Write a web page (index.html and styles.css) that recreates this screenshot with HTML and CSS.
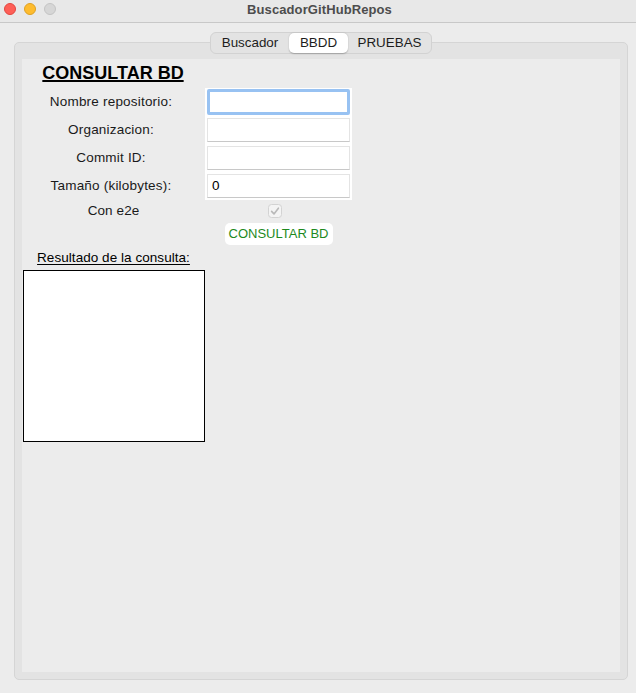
FILE: index.html
```html
<!DOCTYPE html>
<html lang="es">
<head>
<meta charset="utf-8">
<title>BuscadorGitHubRepos</title>
<link rel="stylesheet" href="styles.css">
</head>
<body>
<div class="titlebar">
  <div class="lights">
    <span class="light red"></span>
    <span class="light yellow"></span>
    <span class="light grey"></span>
  </div>
  <div class="title">BuscadorGitHubRepos</div>
  <div></div>
</div>
<div class="content">
  <div class="tabs">
    <span class="tab tab-1">Buscador</span>
    <span class="tab tab-2 active">BBDD</span>
    <span class="tab tab-3">PRUEBAS</span>
  </div>
  <div class="group">
    <div class="panel">
      <div class="row heading-row">
        <h1 class="heading col1">CONSULTAR BD</h1>
      </div>
      <div class="row form">
        <div class="labels col1">
          <span class="label">Nombre repositorio:</span>
          <span class="label">Organizacion:</span>
          <span class="label">Commit ID:</span>
          <span class="label">Tamaño (kilobytes):</span>
        </div>
        <div class="entries col2">
          <div class="entry focus"></div>
          <div class="entry"></div>
          <div class="entry"></div>
          <div class="entry">0</div>
        </div>
      </div>
      <div class="row check-row">
        <span class="col1 label-sm">Con e2e</span>
        <span class="col2 check-cell">
          <svg class="checkbox" width="14" height="14" viewBox="0 0 14 14">
            <rect x="0.5" y="0.5" width="13" height="13" rx="3" fill="#f4f4f4" stroke="#d3d3d3"/>
            <path d="M3.6 7.4 L6 9.9 L10.4 4.2" fill="none" stroke="#b9b9b9" stroke-width="1.6" stroke-linecap="round" stroke-linejoin="round"/>
          </svg>
        </span>
      </div>
      <div class="row button-row">
        <span class="col1"></span>
        <span class="col2 btn-cell"><button class="btn">CONSULTAR BD</button></span>
      </div>
      <div class="result-label">Resultado de la consulta:</div>
      <div class="result-box"></div>
    </div>
  </div>
</div>
</body>
</html>
```

FILE: styles.css
```css
* { box-sizing: border-box; }

html, body {
  margin: 0;
  padding: 0;
}

body {
  width: 636px;
  height: 693px;
  background: #ececec;
  font-family: "Liberation Sans", Arial, sans-serif;
  font-size: 13px;
  color: #1d1d1d;
  overflow: hidden;
}

.titlebar {
  height: 23px;
  display: grid;
  grid-template-columns: 1fr auto 1fr;
  align-items: start;
  background: #e8e8e8;
  border-bottom: 1px solid #c8c8c8;
}

.lights {
  display: flex;
  gap: 8px;
  padding-left: 4px;
  padding-top: 3px;
}

.light {
  width: 12px;
  height: 12px;
  border-radius: 50%;
}

.red { background: #fe5f57; border: 0.5px solid #e2463f; }
.yellow { background: #febc2e; border: 0.5px solid #dea123; }
.grey { background: #d6d6d6; border: 0.5px solid #c4c4c4; }

.title {
  font-weight: bold;
  font-size: 13px;
  line-height: 20px;
  color: #4d4d4d;
  padding-left: 3px;
  letter-spacing: 0.1px;
}

.content {
  padding: 9px 8px 0 14px;
}

.tabs {
  position: relative;
  z-index: 1;
  width: 222px;
  height: 22px;
  margin: 0 auto -12px;
  display: flex;
  align-items: center;
  background: #e3e3e3;
  border: 1px solid #d2d2d2;
  border-radius: 6px;
}

.tab {
  height: 20px;
  line-height: 20px;
  text-align: center;
  color: #1d1d1d;
  font-size: 13.4px;
}

.tab-1 { width: 78px; }
.tab-2 { width: 59px; }
.tab-3 { width: 83px; }

.tab.active {
  background: #ffffff;
  border-radius: 5px;
  box-shadow: 0 0.5px 1.5px rgba(0, 0, 0, 0.25);
}

.group {
  height: 638px;
  background: #e3e3e3;
  border: 1px solid #d5d5d5;
  border-radius: 5px;
  padding: 16px 7px 7px 7px;
  display: flex;
}

.panel {
  flex: 1;
  background: #ececec;
  padding-top: 3px;
  display: flex;
  flex-direction: column;
}

.row {
  display: flex;
}

.col1 { width: 183px; flex: none; }
.col2 { width: 147px; flex: none; }

.heading {
  margin: 0 0 4px 0;
  font-size: 18px;
  line-height: 22px;
  font-weight: bold;
  text-align: center;
  color: #000;
  text-decoration: underline;
  text-decoration-thickness: 2px;
  text-underline-offset: 1px;
  padding-right: 1px;
}

.labels {
  display: flex;
  flex-direction: column;
  gap: 4px;
  padding-top: 2px;
}

.label {
  height: 24px;
  line-height: 24px;
  text-align: center;
  padding-right: 5px;
  color: #1a1a1a;
  font-size: 13.5px;
  letter-spacing: 0.2px;
}

.entries {
  background: #ffffff;
  padding: 2px;
  display: flex;
  flex-direction: column;
  gap: 4px;
}

.entry {
  height: 24px;
  background: #ffffff;
  border: 1px solid #e4e4e4;
  border-bottom-color: #c8c8c8;
  line-height: 22px;
  padding-left: 4px;
  color: #000;
  font-size: 13.5px;
}

.entry.focus {
  border: 3px solid #98c2f2;
  border-radius: 2px;
  margin: -1px 0;
  height: 26px;
}

.check-row {
  height: 22px;
  align-items: center;
}

.label-sm {
  text-align: center;
  line-height: 22px;
  color: #1a1a1a;
  font-size: 13.5px;
  letter-spacing: 0.1px;
}

.check-cell {
  display: flex;
  justify-content: center;
  padding-right: 8px;
}

.button-row {
  margin-top: 1px;
}

.btn-cell {
  display: flex;
  justify-content: center;
}

.btn {
  width: 108px;
  height: 22px;
  border: none;
  border-radius: 5px;
  background: #ffffff;
  color: #1e8a1e;
  font-family: "Liberation Sans", Arial, sans-serif;
  font-size: 13px;
  padding: 0;
  line-height: 22px;
}

.result-label {
  width: 183px;
  margin-top: 5px;
  line-height: 16px;
  text-align: center;
  color: #000;
  font-size: 13.5px;
  letter-spacing: 0.05px;
  text-decoration: underline;
  text-underline-offset: 2px;
}

.result-box {
  width: 182px;
  height: 172px;
  margin: 4px 0 0 1px;
  background: #ffffff;
  border: 1px solid #000;
}
```
